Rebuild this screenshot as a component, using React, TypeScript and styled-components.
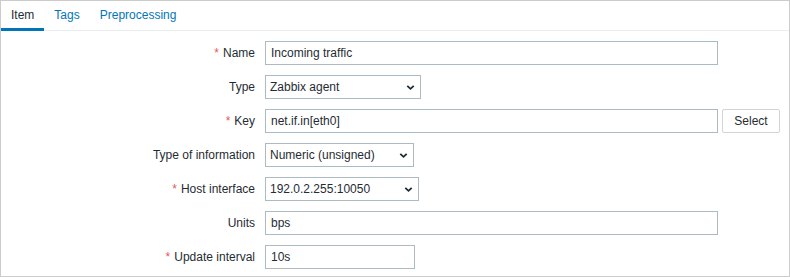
import React from "react";
import styled, { createGlobalStyle } from "styled-components";

const GlobalStyle = createGlobalStyle`
    html, body {
        margin: 0;
        padding: 0;
        background: #ffffff;
    }
    body {
        font-family: "Liberation Sans", Arial, sans-serif;
        font-size: 12px;
        color: #1f2c33;
    }
`;

const Frame = styled.div`
    box-sizing: border-box;
    width: 790px;
    height: 277px;
    border: 1px solid #cccccc;
    background: #ffffff;
    overflow: hidden;
`;

const TabList = styled.ul`
    display: flex;
    margin: 0;
    padding: 0;
    list-style: none;
    height: 29px;
    border-bottom: 1px solid #ebeef0;
`;

const Tab = styled.li<{ active?: boolean }>`
    box-sizing: border-box;
    height: 30px;
    margin-bottom: -1px;
    padding: 0 10px;
    display: flex;
    align-items: center;
    padding-top: 1px;
    color: ${({ active }) => (active ? "#1f2c33" : "#0275b8")};
    border-bottom: 3px solid ${({ active }) => (active ? "#0275b8" : "transparent")};
    cursor: pointer;
`;

const Form = styled.div`
    display: grid;
    grid-template-columns: 254px 1fr;
    column-gap: 10px;
    row-gap: 10px;
    padding-top: 10px;
`;

const Label = styled.label`
    display: flex;
    align-items: center;
    justify-content: flex-end;
    height: 24px;
    white-space: nowrap;
`;

const Asterisk = styled.span`
    color: #e45959;
    margin-right: 4px;
`;

const Field = styled.div`
    display: flex;
    align-items: center;
    gap: 3px;
    height: 24px;
`;

const TextInput = styled.input<{ w: number }>`
    box-sizing: border-box;
    width: ${({ w }) => w}px;
    height: 24px;
    margin: 0;
    padding: 0 5px;
    border: 1px solid #acbbc2;
    border-radius: 0;
    background: #ffffff;
    font-family: "Liberation Sans", Arial, sans-serif;
    font-size: 12px;
    color: #1f2c33;
    outline: none;
`;

const SelectBox = styled.div<{ w: number }>`
    box-sizing: border-box;
    position: relative;
    width: ${({ w }) => w}px;
    height: 24px;
    border: 1px solid #acbbc2;
    background: #ffffff;
    display: flex;
    align-items: center;
    padding: 0 20px 0 4px;
    cursor: pointer;
`;

const Chevron = styled.svg`
    position: absolute;
    right: 5px;
    top: 8px;
`;

const Button = styled.button`
    box-sizing: border-box;
    width: 58px;
    height: 24px;
    margin: 0 0 0 1px;
    padding: 0;
    border: 1px solid #cfd6db;
    border-radius: 2px;
    background: #ffffff;
    font-family: "Liberation Sans", Arial, sans-serif;
    font-size: 12px;
    color: #1f2c33;
    cursor: pointer;
`;

const Select = ({ value, width }: { value: string; width: number }) => (
    <SelectBox w={width}>
        {value}
        <Chevron width="9" height="7" viewBox="0 0 9 7">
            <path d="M1.3 1.8 L4.5 4.8 L7.7 1.8" fill="none" stroke="#1f2c33" strokeWidth="1.8" />
        </Chevron>
    </SelectBox>
);

const Row = ({ label, required, children }: { label: string; required?: boolean; children: React.ReactNode }) => (
    <>
        <Label>
            {required && <Asterisk>*</Asterisk>}
            {label}
        </Label>
        <Field>{children}</Field>
    </>
);

export default function App() {
    return (
        <>
            <GlobalStyle />
            <Frame>
                <TabList>
                    <Tab active>Item</Tab>
                    <Tab>Tags</Tab>
                    <Tab>Preprocessing</Tab>
                </TabList>
                <Form>
                    <Row label="Name" required>
                        <TextInput w={453} defaultValue="Incoming traffic" />
                    </Row>
                    <Row label="Type">
                        <Select value="Zabbix agent" width={156} />
                    </Row>
                    <Row label="Key" required>
                        <TextInput w={453} defaultValue="net.if.in[eth0]" />
                        <Button>Select</Button>
                    </Row>
                    <Row label="Type of information">
                        <Select value="Numeric (unsigned)" width={149} />
                    </Row>
                    <Row label="Host interface" required>
                        <Select value="192.0.2.255:10050" width={154} />
                    </Row>
                    <Row label="Units">
                        <TextInput w={453} defaultValue="bps" />
                    </Row>
                    <Row label="Update interval" required>
                        <TextInput w={150} defaultValue="10s" />
                    </Row>
                </Form>
            </Frame>
        </>
    );
}
